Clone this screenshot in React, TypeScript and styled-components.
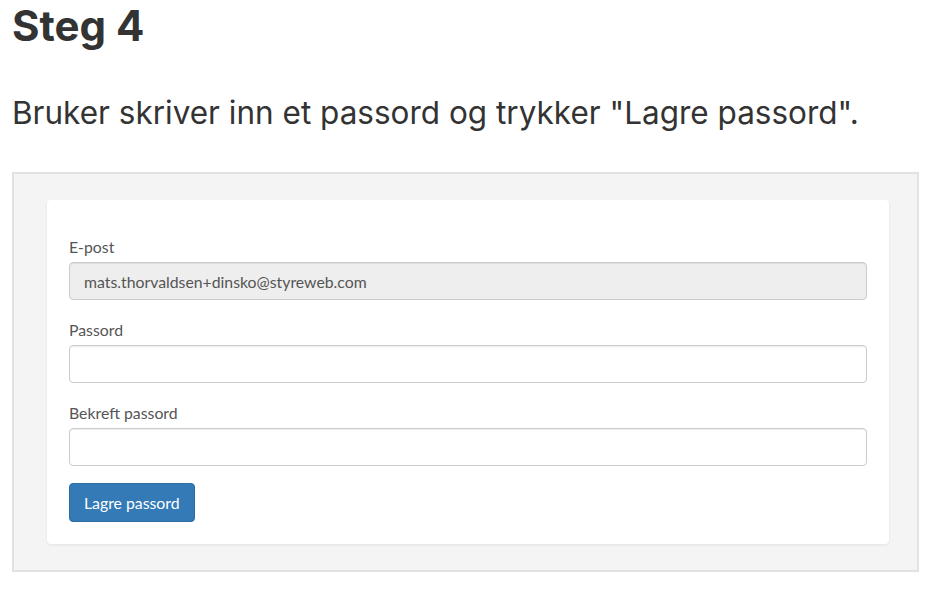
import React from "react";
import styled, { createGlobalStyle } from "styled-components";

const GlobalStyle = createGlobalStyle`
  html, body { margin: 0; padding: 0; background: #ffffff; }
  body { font-family: Inter, "Noto Sans", sans-serif; color: #333333; }
  * { box-sizing: border-box; }
`;

const Page = styled.div`
  padding: 0 17px 0 12px;
`;

const Heading = styled.h2`
  margin: 0;
  padding-top: 1.5px;
  font-family: Inter, sans-serif;
  font-weight: 700;
  font-size: 42px;
  line-height: 48px;
  color: #333333;
`;

const Lead = styled.p`
  margin: 40.5px 0 0 0;
  font-family: Inter, sans-serif;
  font-weight: 400;
  font-size: 31.5px;
  line-height: 46px;
  color: #333333;
`;

const Frame = styled.div`
  margin-top: 36px;
  width: 907px;
  height: 400px;
  border: 2px solid #e2e2e2;
  background: #f4f4f4;
  padding: 26px 28px 26px 33px;
`;

const Card = styled.form`
  background: #ffffff;
  border-radius: 4px;
  box-shadow: 0 1px 3px rgba(0, 0, 0, 0.08);
  padding: 37px 22px 22px 22px;
  font-family: Lato, "Open Sans", sans-serif;
`;

const Group = styled.div`
  display: flex;
  flex-direction: column;
  margin-bottom: 20px;
  &:last-of-type { margin-bottom: 17px; }
`;

const Label = styled.label`
  font-size: 15.8px;
  line-height: 20px;
  color: #555555;
  margin-bottom: 5px;
`;

const Input = styled.input<{ $disabled?: boolean }>`
  height: 38px;
  width: 100%;
  border: 1px solid #cccccc;
  border-radius: 4px;
  padding: 0 14px;
  font-family: Lato, "Open Sans", sans-serif;
  font-size: 15.8px;
  color: #555555;
  background: ${(p) => (p.$disabled ? "#eeeeee" : "#ffffff")};
  box-shadow: inset 0 1px 1px rgba(0, 0, 0, 0.075);
  outline: none;
`;

const Button = styled.button`
  height: 39px;
  padding: 0 14px;
  border: 1px solid #2e6da4;
  border-radius: 4px;
  background: #337ab7;
  color: #ffffff;
  font-family: Lato, "Open Sans", sans-serif;
  font-size: 15.8px;
  line-height: 20px;
  cursor: pointer;
`;

export default function App() {
  return (
    <>
      <GlobalStyle />
      <Page>
        <Heading>Steg 4</Heading>
        <Lead>Bruker skriver inn et passord og trykker "Lagre passord".</Lead>
        <Frame>
          <Card onSubmit={(e) => e.preventDefault()}>
            <Group>
              <Label>E-post</Label>
              <Input $disabled readOnly value="mats.thorvaldsen+dinsko@styreweb.com" />
            </Group>
            <Group>
              <Label>Passord</Label>
              <Input type="password" />
            </Group>
            <Group>
              <Label>Bekreft passord</Label>
              <Input type="password" />
            </Group>
            <Button type="submit">Lagre passord</Button>
          </Card>
        </Frame>
      </Page>
    </>
  );
}
